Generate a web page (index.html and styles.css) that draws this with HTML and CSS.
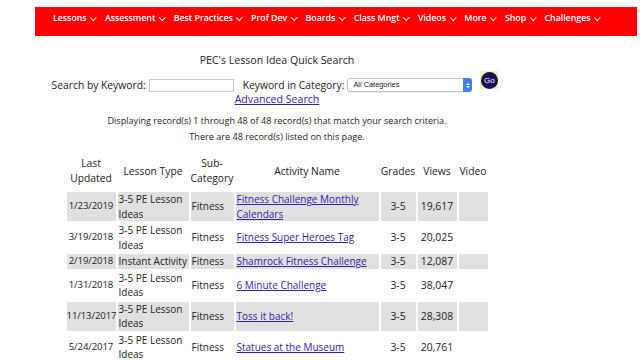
FILE: index.html
```html
<!DOCTYPE html>
<html>
<head>
<meta charset="utf-8">
<link rel="stylesheet" href="styles.css">
</head>
<body>
<nav class="nav">
  <a class="nav-item">Lessons<span class="chev"></span></a>
  <a class="nav-item">Assessment<span class="chev"></span></a>
  <a class="nav-item">Best Practices<span class="chev"></span></a>
  <a class="nav-item">Prof Dev<span class="chev"></span></a>
  <a class="nav-item">Boards<span class="chev"></span></a>
  <a class="nav-item">Class Mngt<span class="chev"></span></a>
  <a class="nav-item">Videos<span class="chev"></span></a>
  <a class="nav-item">More<span class="chev"></span></a>
  <a class="nav-item">Shop<span class="chev"></span></a>
  <a class="nav-item">Challenges<span class="chev"></span></a>
</nav>
<main class="content">
  <h1 class="title">PEC's Lesson Idea Quick Search</h1>
  <div class="search-row">
    <label class="lbl">Search by Keyword:</label>
    <span class="input"></span>
    <label class="lbl cat-lbl">Keyword in Category:</label>
    <span class="select">All Categories<span class="stepper"><span class="arr-up"></span><span class="arr-dn"></span></span></span>
    <span class="go-wrap"><span class="go">Go</span></span>
  </div>
  <div class="adv"><a href="#" class="link">Advanced Search</a></div>
  <p class="info">Displaying record(s) 1 through 48 of 48 record(s) that match your search criteria.<br>There are 48 record(s) listed on this page.</p>
  <table class="results">
    <thead>
      <tr>
        <th class="c1">Last<br>Updated</th>
        <th class="c2">Lesson Type</th>
        <th class="c3">Sub-<br>Category</th>
        <th class="c4">Activity Name</th>
        <th class="c5">Grades</th>
        <th class="c6">Views</th>
        <th class="c7">Video</th>
      </tr>
    </thead>
    <tbody>
      <tr class="g"><td class="ctr">1/23/2019</td><td>3-5 PE Lesson Ideas</td><td>Fitness</td><td><a href="#" class="link">Fitness Challenge Monthly Calendars</a></td><td class="num">3-5</td><td class="num">19,617</td><td></td></tr>
      <tr><td class="ctr">3/19/2018</td><td>3-5 PE Lesson Ideas</td><td>Fitness</td><td><a href="#" class="link">Fitness Super Heroes Tag</a></td><td class="num">3-5</td><td class="num">20,025</td><td></td></tr>
      <tr class="g"><td class="ctr">2/19/2018</td><td>Instant Activity</td><td>Fitness</td><td><a href="#" class="link">Shamrock Fitness Challenge</a></td><td class="num">3-5</td><td class="num">12,087</td><td></td></tr>
      <tr><td class="ctr">1/31/2018</td><td>3-5 PE Lesson Ideas</td><td>Fitness</td><td><a href="#" class="link">6 Minute Challenge</a></td><td class="num">3-5</td><td class="num">38,047</td><td></td></tr>
      <tr class="g"><td class="ctr">11/13/2017</td><td>3-5 PE Lesson Ideas</td><td>Fitness</td><td><a href="#" class="link">Toss it back!</a></td><td class="num">3-5</td><td class="num">28,308</td><td></td></tr>
      <tr><td class="ctr">5/24/2017</td><td>3-5 PE Lesson Ideas</td><td>Fitness</td><td><a href="#" class="link">Statues at the Museum</a></td><td class="num">3-5</td><td class="num">20,761</td><td></td></tr>
    </tbody>
  </table>
</main>
</body>
</html>
```
FILE: styles.css
```css
html, body {
  margin: 0;
  padding: 0;
  background: #fff;
  font-family: "Open Sans", "DejaVu Sans", sans-serif;
  color: #222;
}
.nav {
  margin: 7px 0 0 35px;
  width: 602px;
  height: 29px;
  background: #ff0000;
  display: flex;
  align-items: flex-start;
  padding: 5px 0 0 18px;
  box-sizing: border-box;
  gap: 9.3px;
}
.nav-item {
  color: #fff;
  font-size: 8.9px;
  font-weight: 600;
  line-height: 12px;
  display: flex;
  align-items: center;
  white-space: nowrap;
  letter-spacing: -0.05px;
}
.chev {
  width: 3.5px;
  height: 3.5px;
  border-right: 1.6px solid #fff;
  border-bottom: 1.6px solid #fff;
  transform: rotate(45deg);
  margin: -2px 0 0 4.5px;
}
.content {
  width: 484px;
  margin-left: 35px;
  display: flex;
  flex-direction: column;
  align-items: center;
}
.title {
  font-size: 10.6px;
  font-weight: 400;
  margin: 17px 0 0;
  line-height: 14px;
  color: #222;
}
.search-row {
  display: flex;
  align-items: center;
  margin-top: 11px;
  height: 14px;
  position: relative;
  left: -2px;
}
.lbl {
  font-size: 10.3px;
  line-height: 14px;
}
.input {
  width: 83px;
  height: 11px;
  border: 1px solid #c8c8c8;
  margin-left: 3px;
  background: #fff;
}
.cat-lbl {
  margin-left: 9px;
}
.select {
  margin-left: 3px;
  width: 118px;
  height: 12px;
  border: 1px solid #c4c4c4;
  border-radius: 3px;
  font-family: "Liberation Sans", Arial, sans-serif;
  font-size: 7.4px;
  line-height: 12px;
  padding-left: 5px;
  box-sizing: content-box;
  position: relative;
  display: flex;
  align-items: center;
  color: #222;
  box-shadow: 0 1px 1px rgba(0,0,0,0.08);
}
.stepper {
  position: absolute;
  right: -1px;
  top: -1px;
  width: 9px;
  height: 14px;
  background: #3c84f4;
  border-radius: 0 3px 3px 0;
  display: flex;
  flex-direction: column;
  align-items: center;
  justify-content: center;
  gap: 1px;
}
.arr-up, .arr-dn {
  width: 0;
  height: 0;
  border-left: 2px solid transparent;
  border-right: 2px solid transparent;
}
.arr-up { border-bottom: 2px solid #fff; }
.arr-dn { border-top: 2px solid #fff; }
.go-wrap {
  margin-left: 8px;
  width: 18px;
  height: 18px;
  background: #f2f2b8;
  display: flex;
  align-items: center;
  justify-content: center;
  position: relative;
  top: -5px;
}
.go {
  width: 17px;
  height: 17px;
  border-radius: 50%;
  background: #15105a;
  color: #fff;
  font-size: 8px;
  line-height: 17px;
  text-align: center;
  font-family: "Liberation Sans", Arial, sans-serif;
}
.adv {
  margin-top: 0;
  font-size: 10.6px;
  line-height: 14px;
}
.link {
  color: #3322aa;
  text-decoration: underline;
}
.info {
  margin: 7px 0 0;
  font-size: 9.1px;
  line-height: 16px;
  text-align: center;
  color: #222;
}
.results {
  margin-top: 9px;
  border-collapse: separate;
  border-spacing: 2px;
  table-layout: fixed;
  width: 425px;
  font-size: 10px;
  line-height: 14.5px;
  color: #222;
}
.results th, .results td {
  box-sizing: border-box;
}
.results th {
  font-weight: 400;
  font-size: 10.3px;
  line-height: 15px;
  text-align: center;
  padding: 0 0 4px;
  vertical-align: middle;
}
.results td {
  padding: 0 1px;
  vertical-align: middle;
  text-align: left;
}
.results td.ctr { text-align: center; padding: 0; white-space: nowrap; font-size: 9.6px; letter-spacing: -0.1px; }
.results td.num { text-align: center; font-size: 10.4px; }
.results tr.g td { background: #e0e0e0; }
.c1 { width: 49px; }
.c2 { width: 71px; }
.c3 { width: 43px; }
.c4 { width: 143px; }
.c5 { width: 35px; }
.c6 { width: 39px; }
.c7 { width: 29px; }
```
